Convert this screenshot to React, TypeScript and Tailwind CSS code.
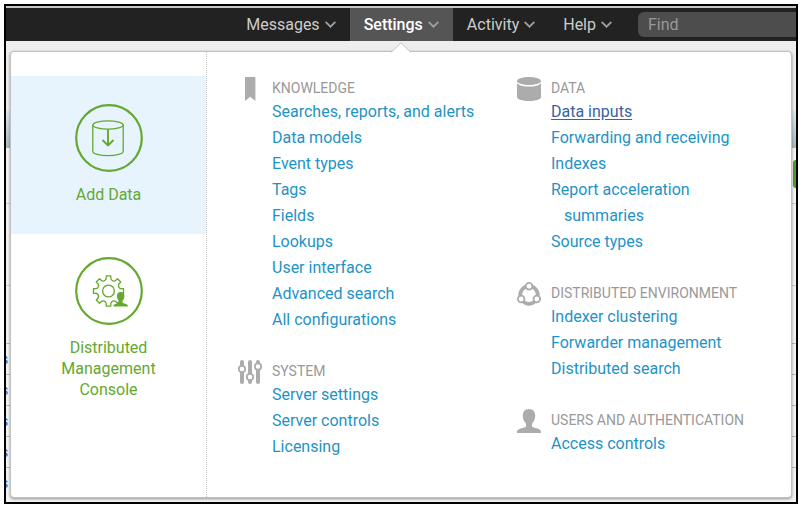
import type { ReactNode } from "react";

type Item = { label: string; active?: boolean };

const menus: Item[] = [
  { label: "Messages" },
  { label: "Settings", active: true },
  { label: "Activity" },
  { label: "Help" },
];

function Chevron() {
  return (
    <svg viewBox="0 0 11 7" className="h-[7px] w-[11px] shrink-0" fill="none" stroke="#a0a0a0" strokeWidth="1.7">
      <path d="M0.6 0.8 5.5 5.7 10.4 0.8" />
    </svg>
  );
}

function BookmarkIcon() {
  return (
    <svg viewBox="0 0 24 24" className="size-6" fill="#acacac">
      <path d="M7.6 0h9.200q.6 0 .6.6V24L12.200 19.800 7 24V.6q0-.6.6-.6z" />
    </svg>
  );
}

function SlidersIcon() {
  return (
    <svg viewBox="0 0 24 24" className="size-6" fill="none" stroke="#acacac">
      <g strokeWidth="4" strokeLinecap="round">
        <path d="M4 2v4M4 12v10M12 2v12M12 20v2M20 2v2M20 9v13" />
      </g>
      <g strokeWidth="1.800" fill="#fff">
        <circle cx="4" cy="9" r="3.200" />
        <circle cx="12" cy="17" r="3.200" />
        <circle cx="20" cy="6.500" r="3.200" />
      </g>
    </svg>
  );
}

function DatabaseIcon() {
  return (
    <svg viewBox="0 0 24 24" className="size-6" fill="#acacac">
      <ellipse cx="12" cy="4" rx="12" ry="4" />
      <path d="M0 6.200C2 8.600 7 9.600 12 9.600S22 8.600 24 6.200V20c0 2.400-5.400 4-12 4S0 22.400 0 20z" />
    </svg>
  );
}

function ClusterIcon() {
  return (
    <svg viewBox="0 0 24 24" className="size-6" fill="none" stroke="#acacac">
      <circle cx="12" cy="13" r="8.800" strokeWidth="3.800" />
      <g fill="#fff" strokeWidth="1.800">
        <circle cx="12" cy="4.200" r="3.300" />
        <circle cx="4.200" cy="17" r="3.300" />
        <circle cx="19.800" cy="17" r="3.300" />
      </g>
    </svg>
  );
}

const personPath =
  "M12 0c4 0 6.200 2.800 6.200 6.600 0 3.600-1.400 6.400-3.200 8v2.200c0 1 .6 1.400 2 1.800 4 1.200 7 2 7 4.200V24H0v-1.200c0-2.200 3-3 7-4.200 1.400-.4 2-.8 2-1.800v-2.200c-1.800-1.600-3.200-4.400-3.200-8C5.800 2.800 8 0 12 0z";

function PersonIcon() {
  return (
    <svg viewBox="0 0 24 24" className="size-6" fill="#acacac">
      <path d={personPath} />
    </svg>
  );
}

function AddDataIcon() {
  return (
    <svg viewBox="0 0 68 68" className="size-[68px]" fill="none" stroke="#64a82f">
      <circle cx="34" cy="34" r="32.800" strokeWidth="2.200" />
      <g strokeWidth="1.300">
        <ellipse cx="33" cy="21" rx="15.200" ry="4.200" />
        <path d="M17.800 21v26.500c0 2.300 6.800 4.200 15.200 4.200s15.200-1.900 15.200-4.200V21" />
      </g>
      <path d="M33 25.200V41M27.500 36l5.500 5.500L38.500 36" strokeWidth="1.900" />
    </svg>
  );
}

function gearPath(cx: number, cy: number) {
  const points: string[] = [];
  const teeth = 8;
  const step = (Math.PI * 2) / teeth;
  const at = (r: number, a: number) => `${(cx + r * Math.cos(a)).toFixed(2)} ${(cy + r * Math.sin(a)).toFixed(2)}`;
  for (let i = 0; i < teeth; i++) {
    const a = i * step - Math.PI / 2;
    points.push(`${i === 0 ? "M" : "L"}${at(15.2, a - 0.15)}`);
    points.push(`L${at(15.2, a + 0.15)}`);
    points.push(`L${at(12.2, a + 0.2)}`);
    points.push(`Q${at(10, a + step / 2)} ${at(12.2, a + step - 0.2)}`);
  }
  return points.join("") + "Z";
}

function ConsoleIcon() {
  return (
    <svg viewBox="0 0 68 68" className="size-[68px]" fill="none" stroke="#64a82f">
      <circle cx="34" cy="34" r="32.800" strokeWidth="2.200" />
      <g strokeWidth="1.300" strokeLinejoin="round">
        <path d={gearPath(33.5, 34)} />
        <circle cx="33.500" cy="34" r="5.900" />
      </g>
      <path d={personPath} transform="translate(38.500 35) scale(0.6)" fill="#64a82f" stroke="none" />
    </svg>
  );
}

function Section({ icon, title, children }: { icon: ReactNode; title: string; children: ReactNode }) {
  return (
    <section className="flex gap-2.5">
      <div className="shrink-0">{icon}</div>
      <div className="min-w-0">
        <h2 className="text-[14px] leading-[22px] whitespace-nowrap text-[#999]">{title}</h2>
        <ul>{children}</ul>
      </div>
    </section>
  );
}

function Entry({ children, hovered }: { children: ReactNode; hovered?: boolean }) {
  return (
    <li className="leading-[26px]">
      <a href="#" className={hovered ? "text-[#3863a0] underline underline-offset-2" : "text-[#1e93c6]"}>
        {children}
      </a>
    </li>
  );
}

function Backdrop() {
  return (
    <div className="col-start-1 row-start-1 flex flex-col bg-[#f4f4f4]" aria-hidden="true">
      <div className="h-[69px] bg-[#eee]" />
      <div className="h-[38px] bg-linear-to-b from-[#dfe9ee] to-[#a9b8c2]" />
      <div className="flex h-[55px] items-start justify-end pt-3">
        <div className="h-7 w-[3px] rounded-l-sm bg-[#4f9a28]" />
      </div>
      <div className="h-[82px] border-t border-[#ccc]" />
      <div className="h-[58px] border-t border-[#ccc]" />
      {[0, 1, 2, 3, 4].map((row) => (
        <div
          key={row}
          className="h-[31px] overflow-hidden border-t border-[#bbb] text-[14px] leading-[30px] text-[#1e6fb8]"
        >
          <span className="-ml-[5px]">s</span>
        </div>
      ))}
    </div>
  );
}

export default function App() {
  return (
    <div className="bg-white py-1 pr-1.5 pl-1 font-[Roboto,sans-serif] text-[16px]">
      <div className="overflow-hidden border-2 border-black">
        <header className="flex h-[35px] justify-end border-t-2 border-[#c9c6cb] bg-[#222]">
          <nav className="flex">
            {menus.map((m) => (
              <button
                key={m.label}
                type="button"
                className={
                  m.active
                    ? "flex items-center gap-[5px] bg-[#555] px-3.5 font-medium text-white"
                    : "flex items-center gap-[5px] px-3.5 text-[#ccc]"
                }
              >
                {m.label}
                <Chevron />
              </button>
            ))}
          </nav>
          <input
            type="text"
            aria-label="Find"
            placeholder="Find"
            className="mt-1 mb-1 ml-3 w-[158px] rounded-l-md bg-[#4d4d4d] px-2.5 text-white outline-none placeholder:text-[#999]"
          />
        </header>

        <main className="grid">
          <Backdrop />
          <div className="relative z-10 col-start-1 row-start-1 mx-1 mt-2.5 mb-1 flex rounded-[4px] border border-[#c0c0c0] bg-white shadow-[0_1px_3px_rgba(0,0,0,0.4)]">
            <svg viewBox="0 0 20 11" className="absolute -top-2.5 left-[380px] h-[11px] w-5">
              <path d="M0 10.500 10 .8 20 10.500V11H0z" fill="#fff" />
              <path d="M0 10.500 10 .8 20 10.500" fill="none" stroke="#c4c4c4" />
            </svg>

            <aside className="w-[196px] shrink-0 border-r border-dotted border-[#c4c4c4] pt-6 text-center leading-[21px]">
              <a href="#" className="flex h-[158px] flex-col items-center gap-3 bg-[#e7f4fe] pt-7 text-[#64a82f]">
                <AddDataIcon />
                Add Data
              </a>
              <a href="#" className="flex flex-col items-center gap-3 px-10 pt-[23px] text-[#64a82f]">
                <ConsoleIcon />
                Distributed Management Console
              </a>
            </aside>

            <div className="grid grow grid-cols-[279px_1fr] pt-[25px] pb-[37px] pl-[31px]">
              <div className="flex flex-col gap-[27px]">
                <Section icon={<BookmarkIcon />} title="KNOWLEDGE">
                  <Entry>Searches, reports, and alerts</Entry>
                  <Entry>Data models</Entry>
                  <Entry>Event types</Entry>
                  <Entry>Tags</Entry>
                  <Entry>Fields</Entry>
                  <Entry>Lookups</Entry>
                  <Entry>User interface</Entry>
                  <Entry>Advanced search</Entry>
                  <Entry>All configurations</Entry>
                </Section>
                <Section icon={<SlidersIcon />} title="SYSTEM">
                  <Entry>Server settings</Entry>
                  <Entry>Server controls</Entry>
                  <Entry>Licensing</Entry>
                </Section>
              </div>
              <div className="flex flex-col gap-[27px]">
                <Section icon={<DatabaseIcon />} title="DATA">
                  <Entry hovered>Data inputs</Entry>
                  <Entry>Forwarding and receiving</Entry>
                  <Entry>Indexes</Entry>
                  <Entry>
                    Report acceleration
                    <span className="block pl-[13px]">summaries</span>
                  </Entry>
                  <Entry>Source types</Entry>
                </Section>
                <Section icon={<ClusterIcon />} title="DISTRIBUTED ENVIRONMENT">
                  <Entry>Indexer clustering</Entry>
                  <Entry>Forwarder management</Entry>
                  <Entry>Distributed search</Entry>
                </Section>
                <Section icon={<PersonIcon />} title="USERS AND AUTHENTICATION">
                  <Entry>Access controls</Entry>
                </Section>
              </div>
            </div>
          </div>
        </main>
      </div>
    </div>
  );
}
